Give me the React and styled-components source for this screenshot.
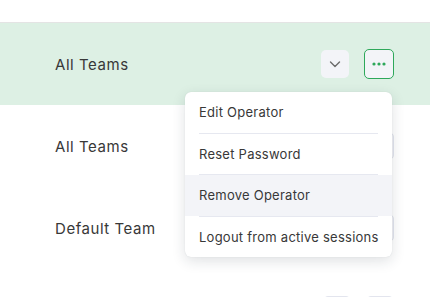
import React from "react";
import styled, { createGlobalStyle } from "styled-components";

const GlobalStyle = createGlobalStyle`
  html, body {
    margin: 0;
    padding: 0;
    background: #ffffff;
    font-family: "Inter", "Noto Sans", sans-serif;
    color: #383838;
    overflow: hidden;
  }
`;

const Page = styled.div`
  width: 430px;
  height: 297px;
  overflow: hidden;
`;

const Header = styled.div`
  height: 22px;
  border-bottom: 1px solid #e4e4e4;
`;

const Row = styled.div`
  position: relative;
  height: 82px;
  display: flex;
  align-items: center;
  justify-content: space-between;
  padding: 0 36px 0 55px;
  background: ${(p) => (p.$active ? "#ddf0e4" : "#ffffff")};
`;

const TeamName = styled.span`
  font-size: 15px;
  letter-spacing: 0.55px;
  color: #383838;
`;

const Actions = styled.div`
  display: flex;
  align-items: center;
  gap: 15px;
`;

const IconButton = styled.button`
  width: ${(p) => (p.$outlined ? "30px" : "28px")};
  height: ${(p) => (p.$outlined ? "30px" : "28px")};
  padding: 0;
  display: flex;
  align-items: center;
  justify-content: center;
  border-radius: 5px;
  background: #f3f4f8;
  border: 1px solid ${(p) => (p.$outlined ? "#2ea85a" : p.$plain ? "#e3e5ee" : "transparent")};
  cursor: pointer;
`;

const Menu = styled.div`
  position: absolute;
  top: 69px;
  right: 38px;
  width: 207px;
  background: #ffffff;
  border-radius: 6px;
  box-shadow: 0 4px 14px rgba(30, 40, 60, 0.14), 0 0 1px rgba(30, 40, 60, 0.15);
  overflow: hidden;
  z-index: 10;
`;

const MenuItem = styled.div`
  height: 40.5px;
  display: flex;
  align-items: center;
  padding: 0 14px;
  font-size: 13px;
  letter-spacing: 0.25px;
  white-space: nowrap;
  color: #383838;
  background: ${(p) => (p.$hover ? "#f3f4f8" : "transparent")};
`;

const Divider = styled.div`
  height: 1px;
  margin: 0 14px;
  background: #e6e8f0;
`;

const Chevron = () => (
  <svg width="12" height="12" viewBox="0 0 12 12" fill="none">
    <path d="M1.5 4 L6 8.5 L10.5 4" stroke="#6b6b6b" strokeWidth="1.4" strokeLinecap="round" strokeLinejoin="round" />
  </svg>
);

const Dots = () => (
  <svg width="14" height="4" viewBox="0 0 14 4">
    <circle cx="2" cy="2" r="1.6" fill="#2ea85a" />
    <circle cx="7" cy="2" r="1.6" fill="#2ea85a" />
    <circle cx="12" cy="2" r="1.6" fill="#2ea85a" />
  </svg>
);

const items = ["Edit Operator", "Reset Password", "Remove Operator", "Logout from active sessions"];

export default function App() {
  const rows = [
    { name: "All Teams", active: true },
    { name: "All Teams" },
    { name: "Default Team" },
    { name: "" },
  ];
  return (
    <Page>
      <GlobalStyle />
      <Header />
      {rows.map((r, i) => (
        <Row key={i} $active={r.active}>
          <TeamName>{r.name}</TeamName>
          <Actions>
            <IconButton $plain={!r.active}>
              <Chevron />
            </IconButton>
            <IconButton $outlined={r.active} $plain={!r.active}>
              <Dots />
            </IconButton>
          </Actions>
          {r.active && (
            <Menu>
              {items.map((t, k) => (
                <React.Fragment key={t}>
                  {k > 0 && <Divider />}
                  <MenuItem $hover={k === 2}>{t}</MenuItem>
                </React.Fragment>
              ))}
            </Menu>
          )}
        </Row>
      ))}
    </Page>
  );
}
